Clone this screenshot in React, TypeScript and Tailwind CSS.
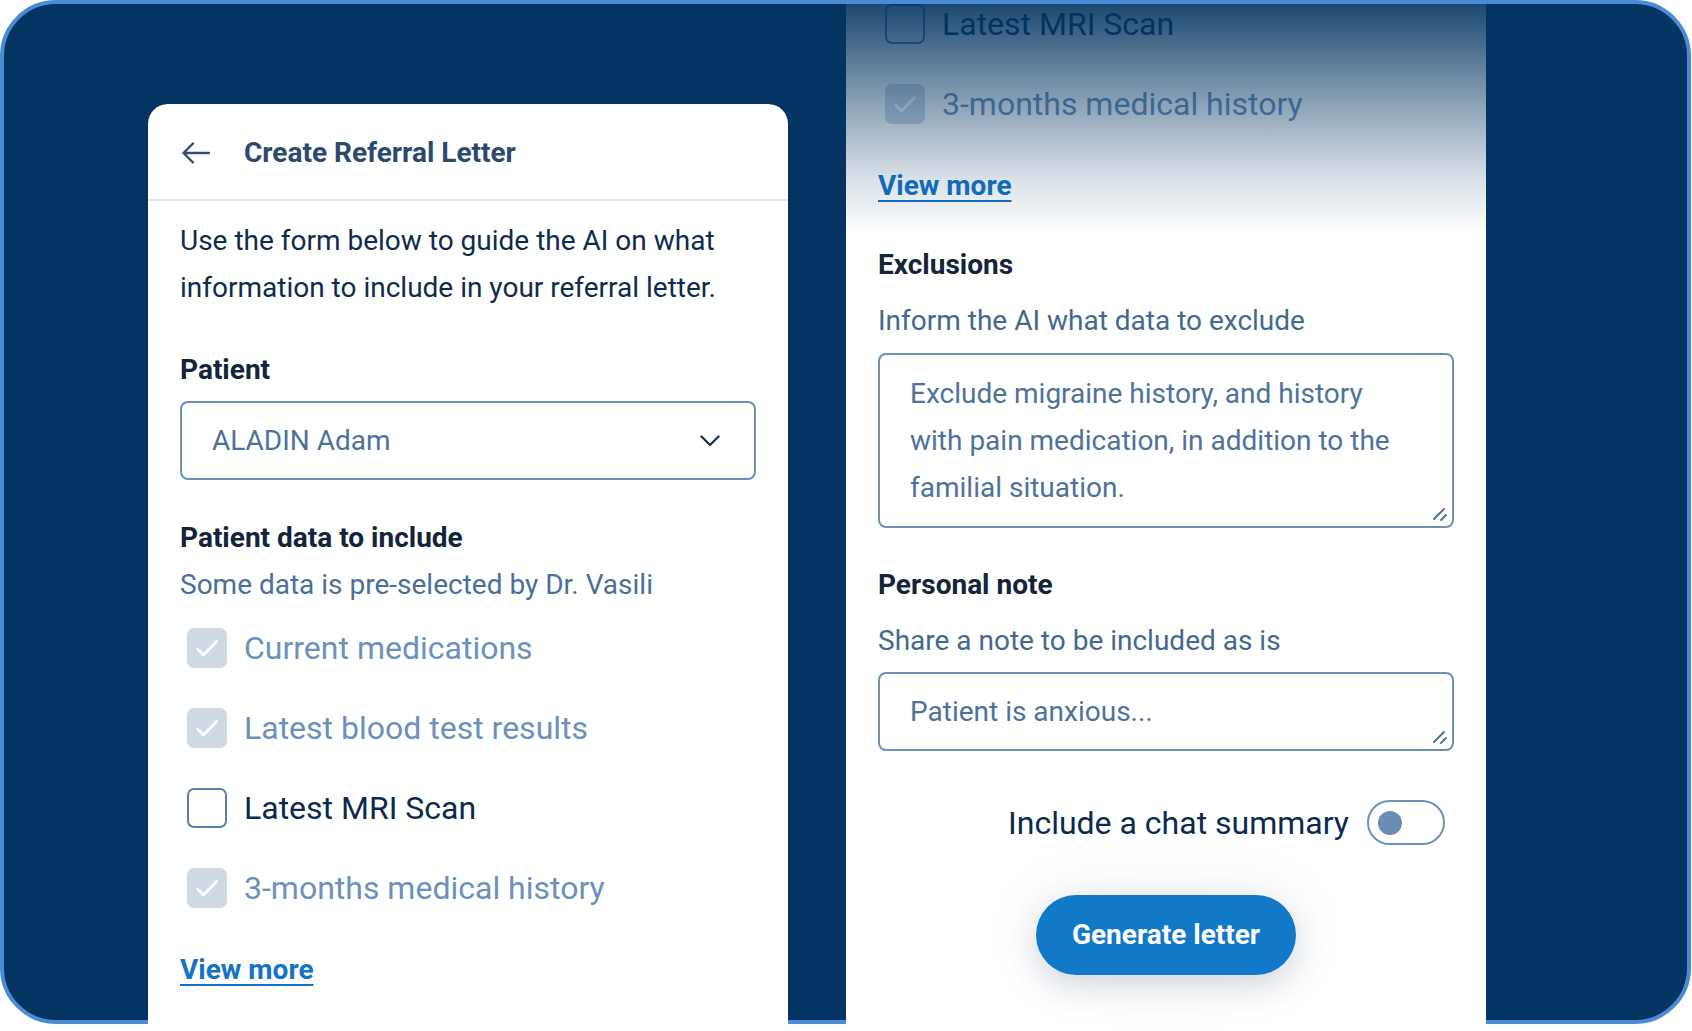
import React from "react";

// Referral letter form, shown twice: the card and a scrolled copy on the right

const fieldBorder = "border-2 border-[#7091b7]";

function Checkbox({ checked }: { checked: boolean }) {
    if (checked) {
        return (
            <span className="ml-[7px] flex h-[40px] w-[40px] shrink-0 items-center justify-center rounded-[7px] bg-[#cfd9e4]">
                <svg width="40" height="40" viewBox="0 0 40 40" fill="none">
                    <path d="M10.5 21 L16.5 27 L29.5 13.5" stroke="#ffffff" strokeWidth="2.6" strokeLinecap="round" strokeLinejoin="round" />
                </svg>
            </span>
        );
    }
    return <span className="ml-[7px] h-[40px] w-[40px] shrink-0 rounded-[7px] border-2 border-[#5d7fa7] bg-white" />;
}

const rows = [
    { label: "Current medications", checked: true },
    { label: "Latest blood test results", checked: true },
    { label: "Latest MRI Scan", checked: false },
    { label: "3-months medical history", checked: true },
];

function Row({ label, checked }: { label: string; checked: boolean }) {
    return (
        <div className="flex h-[80px] items-center gap-[17px]">
            <Checkbox checked={checked} />
            <span className={checked ? "text-[32px] text-[#6d91ba]" : "text-[32px] text-[#0c2a4d]"}>{label}</span>
        </div>
    );
}

function ViewMore({ className }: { className: string }) {
    return (
        <a href="#" className={`block w-fit text-[28px] font-bold leading-[47px] text-[#1373c6] underline decoration-2 underline-offset-[5px] ${className}`}>
            View more
        </a>
    );
}

function ResizeHandle() {
    return (
        <svg className="absolute bottom-[4px] right-[4px]" width="16" height="16" viewBox="0 0 16 16" fill="none">
            <path d="M2 13 L12 3" stroke="#4f7299" strokeWidth="2" strokeLinecap="round" />
            <path d="M9 14 L14 9" stroke="#4f7299" strokeWidth="2" strokeLinecap="round" />
        </svg>
    );
}

export default function App() {
    return (
        <div className="h-[1031px] w-[1692px] overflow-hidden bg-white font-['Roboto','Liberation_Sans',sans-serif]">
            <div className="flex h-[1024px] w-[1691px] items-start gap-[58px] rounded-[56px] border-4 border-[#4a8bd3] bg-[#033462] pl-[144px]">
                {/* カード */}
                <section className="mt-[100px] h-[935px] w-[640px] shrink-0 rounded-t-[20px] bg-white">
                    <header className="flex h-[97px] items-center gap-[34px] border-b-2 border-[#e3e7ec] px-[34px] pt-[2px]">
                        <svg width="28" height="22" viewBox="0 0 28 22" fill="none">
                            <path d="M27 11 H2 M11 1.5 L1.5 11 L11 20.5" stroke="#2f4d70" strokeWidth="2.4" strokeLinecap="round" strokeLinejoin="round" />
                        </svg>
                        <h1 className="text-[28px] font-bold text-[#2c4a6c]">Create Referral Letter</h1>
                    </header>

                    <div className="flex flex-col px-[32px] pt-[16px]">
                        <p className="text-[28px] leading-[47px] text-[#0f2b4f]">
                            Use the form below to guide the AI on what information to include in your referral letter.
                        </p>

                        <h2 className="mt-[35px] text-[28px] font-bold leading-[47px] text-[#14243a]">Patient</h2>
                        <div className={`mt-[8px] flex h-[79px] items-center justify-between rounded-[8px] pl-[30px] pr-[34px] ${fieldBorder}`}>
                            <span className="text-[28px] text-[#4e729c]">ALADIN Adam</span>
                            <svg width="20" height="12" viewBox="0 0 20 12" fill="none">
                                <path d="M1.5 1.5 L10 10 L18.5 1.5" stroke="#1b3556" strokeWidth="2.4" strokeLinecap="round" strokeLinejoin="round" />
                            </svg>
                        </div>

                        <h2 className="mt-[34px] text-[28px] font-bold leading-[47px] text-[#14243a]">Patient data to include</h2>
                        <p className="text-[28px] leading-[47px] text-[#4a6f98]">Some data is pre-selected by Dr. Vasili</p>

                        {rows.map((r) => (
                            <Row key={r.label} label={r.label} checked={r.checked} />
                        ))}

                        <ViewMore className="mt-[18px]" />
                    </div>
                </section>

                {/* 右パネル（スクロール後） */}
                <section className="relative h-[1027px] w-[640px] shrink-0 overflow-hidden bg-white">
                    <div className="-mt-[20px] flex flex-col px-[32px]">
                        <Row label="Latest MRI Scan" checked={false} />
                        <Row label="3-months medical history" checked={true} />
                        <ViewMore className="mt-[18px]" />

                        <h2 className="mt-[32px] text-[28px] font-bold leading-[47px] text-[#14243a]">Exclusions</h2>
                        <p className="mt-[9px] text-[28px] leading-[47px] text-[#44698f]">Inform the AI what data to exclude</p>
                        <div className={`relative mt-[9px] h-[175px] rounded-[8px] pl-[30px] pr-[32px] pt-[15px] ${fieldBorder}`}>
                            <p className="text-[28px] leading-[47px] text-[#4e729c]">
                                Exclude migraine history, and history with pain medication, in addition to the familial situation.
                            </p>
                            <ResizeHandle />
                        </div>

                        <h2 className="mt-[33px] text-[28px] font-bold leading-[47px] text-[#14243a]">Personal note</h2>
                        <p className="mt-[9px] text-[28px] leading-[47px] text-[#44698f]">Share a note to be included as is</p>
                        <div className={`relative mt-[8px] flex h-[79px] items-center rounded-[8px] pl-[30px] pr-[32px] ${fieldBorder}`}>
                            <span className="text-[28px] text-[#4e729c]">Patient is anxious...</span>
                            <ResizeHandle />
                        </div>

                        <div className="mt-[49px] flex h-[45px] items-center justify-end gap-[18px] pr-[9px]">
                            <span className="text-[32px] text-[#0b2a4f]">Include a chat summary</span>
                            <span className={`flex h-[45px] w-[78px] items-center rounded-full bg-white pl-[9px] ${fieldBorder}`}>
                                <span className="h-[24px] w-[24px] rounded-full bg-[#6b8db5]" />
                            </span>
                        </div>

                        <button className="mt-[50px] h-[80px] w-[260px] self-center rounded-full bg-[#1279c9] text-[28px] font-bold text-white shadow-[0_10px_30px_rgba(20,50,90,0.16),0_0_70px_rgba(20,50,90,0.07)]">
                            Generate letter
                        </button>
                    </div>

                    {/* 上部のフェード */}
                    <div className="pointer-events-none absolute inset-x-0 top-0 h-[235px] bg-[linear-gradient(to_bottom,rgba(3,52,98,0.9)_0px,rgba(3,52,98,0.46)_100px,rgba(3,52,98,0.15)_175px,rgba(3,52,98,0)_232px)]" />
                </section>
            </div>
        </div>
    );
}
